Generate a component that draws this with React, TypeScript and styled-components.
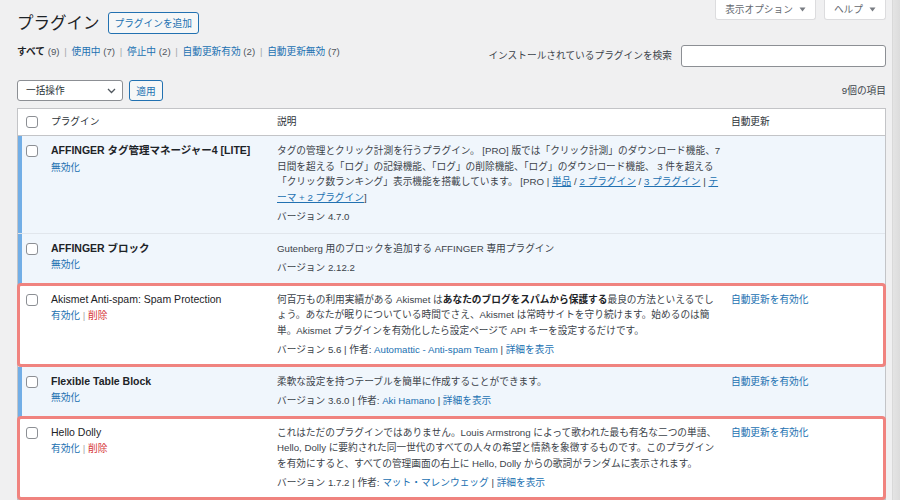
import React from 'react'
import styled, { createGlobalStyle, css } from 'styled-components'

const GlobalStyle = createGlobalStyle`
  * { box-sizing: border-box; }
  html, body { margin: 0; padding: 0; }
  body {
    background: #f0f0f1;
    font-family: "Liberation Sans", "Noto Sans CJK JP", sans-serif;
    font-size: 9.7px;
    line-height: 15.5px;
    color: #3c434a;
    overflow: hidden;
  }
`

const Page = styled.div`
  display: flex;
  min-height: 100vh;
`

const Main = styled.div`
  flex: 1;
  min-width: 0;
  padding: 0 6px 0 17px;
`

const ScrollTrack = styled.div`
  width: 8px;
  background: linear-gradient(to right, #e4e4e4, #dcdcdc);
  border-left: 1px solid #d9d9d9;
`

const TopBar = styled.div`
  display: flex;
  justify-content: space-between;
  align-items: flex-start;
`

const TitleGroup = styled.div`
  display: flex;
  align-items: center;
  gap: 8px;
  padding-top: 12px;
`

const Title = styled.h1`
  margin: 0;
  font-size: 16.5px;
  font-weight: 400;
  line-height: 22px;
  color: #1d2327;
`

const OutlineButton = styled.button`
  height: 22px;
  padding: 0 6px;
  font-family: inherit;
  font-size: 9.7px;
  color: #2271b1;
  background: #f6f7f7;
  border: 1px solid #2271b1;
  border-radius: 3px;
`

const ScreenMeta = styled.div`
  display: flex;
  gap: 8px;
`

const MetaTab = styled.div`
  display: flex;
  align-items: center;
  gap: 6px;
  height: 20px;
  padding: 0 9px;
  color: #646970;
  background: #fff;
  border: 1px solid #dcdcde;
  border-top: none;
  border-radius: 0 0 3px 3px;
`

const FilterBar = styled.div`
  display: flex;
  justify-content: space-between;
  align-items: flex-start;
  margin-top: 10px;
`

const SubSub = styled.ul`
  display: flex;
  margin: 0;
  padding: 0;
  list-style: none;
  white-space: pre;
`

const Current = styled.strong`
  color: #1d2327;
  font-weight: 700;
`

const Count = styled.span`
  color: #50575e;
`

const Sep = styled.span`
  padding: 0 2px;
  color: #a7aaad;
`

const Link = styled.a<{ $underline?: boolean; $danger?: boolean }>`
  color: ${(p) => (p.$danger ? '#d63638' : '#2271b1')};
  text-decoration: ${(p) => (p.$underline ? 'underline' : 'none')};
  cursor: pointer;
`

const SearchBox = styled.div`
  display: flex;
  align-items: center;
  gap: 9px;
  margin-top: 1px;
`

const SearchLabel = styled.label`
  color: #3c434a;
`

const SearchInput = styled.input`
  width: 205px;
  height: 22px;
  border: 1px solid #8c8f94;
  border-radius: 3px;
  background: #fff;
  outline: none;
`

const TableNav = styled.div`
  display: flex;
  justify-content: space-between;
  align-items: center;
  margin-top: 13px;
`

const BulkGroup = styled.div`
  display: flex;
  gap: 6px;
`

const BulkSelect = styled.div`
  display: flex;
  align-items: center;
  justify-content: space-between;
  width: 106px;
  height: 21px;
  padding: 0 6px 0 8px;
  color: #2c3338;
  background: #fff;
  border: 1px solid #8c8f94;
  border-radius: 3px;
`

const ApplyButton = styled(OutlineButton)`
  height: 21px;
  width: 34px;
  padding: 0;
`

const ItemCount = styled.span`
  color: #3c434a;
`

const PluginTable = styled.div`
  margin-top: 7px;
  background: #fff;
  border: 1px solid #c3c4c7;
`

const gridCols = '33px 226px 454px 1fr'

const HeadRow = styled.div`
  display: grid;
  grid-template-columns: ${gridCols};
  border-bottom: 1px solid #c3c4c7;
`

const HeadCell = styled.div`
  padding: 5px 0 5.5px;
  color: #2c3338;
`

const PluginRow = styled.div<{ $active: boolean; $highlight?: boolean }>`
  position: relative;
  display: grid;
  grid-template-columns: ${gridCols};
  background: ${(p) => (p.$active ? '#f0f6fc' : '#fff')};
  box-shadow: ${(p) => (p.$active ? 'inset 4px 0 0 #72aee6' : 'none')};

  & + & {
    border-top: 1px solid #e1e6ec;
  }

  ${(p) =>
    p.$highlight &&
    css`
      z-index: 1;
      border-radius: 3px;
      outline: 3px solid #f0837f;
      outline-offset: -2px;
    `}
`

const CheckCell = styled.div<{ $head?: boolean }>`
  padding: ${(p) => (p.$head ? '6.5px' : '9px')} 0 0 8px;
`

const Checkbox = styled.span`
  display: block;
  width: 12px;
  height: 12px;
  background: #fff;
  border: 1px solid #8c8f94;
  border-radius: 3px;
`

const NameCell = styled.div`
  padding: 7px 10px 8px 0;
`

const PluginTitle = styled.strong<{ $active: boolean }>`
  display: block;
  font-size: 10.5px;
  font-weight: ${(p) => (p.$active ? 700 : 400)};
  color: #1d2327;
`

const RowActions = styled.div`
  padding-top: 1px;
`

const ActionSep = styled.span`
  color: #a7aaad;
  white-space: pre;
`

const DescCell = styled.div`
  padding: 7px 10px 8px 0;
`

const Description = styled.div`
  white-space: nowrap;
  color: #3c434a;

  strong {
    color: #1d2327;
    font-weight: 700;
  }
`

const VersionLine = styled.div`
  margin-top: 4px;
  color: #3c434a;
`

const AutoCell = styled.div`
  padding: 7px 10px 8px 0;
`

type Plugin = {
  name: string
  active: boolean
  highlight?: boolean
  description: React.ReactNode
  version: string
  author?: string
  autoUpdate?: boolean
}

const plugins: Plugin[] = [
  {
    name: 'AFFINGER タグ管理マネージャー4 [LITE]',
    active: true,
    description: (
      <>
        タグの管理とクリック計測を行うプラグイン。 [PRO] 版では「クリック計測」のダウンロード機能、7
        <br />
        日間を超える「ログ」の記録機能、「ログ」の削除機能、「ログ」のダウンロード機能、 3 件を超える
        <br />
        「クリック数ランキング」表示機能を搭載しています。 [PRO | <Link $underline>単品</Link> /{' '}
        <Link $underline>2 プラグイン</Link> / <Link $underline>3 プラグイン</Link> |{' '}
        <Link $underline>
          テ
          <br />
          ーマ + 2 プラグイン
        </Link>
        ]
      </>
    ),
    version: '4.7.0',
  },
  {
    name: 'AFFINGER ブロック',
    active: true,
    description: 'Gutenberg 用のブロックを追加する AFFINGER 専用プラグイン',
    version: '2.12.2',
  },
  {
    name: 'Akismet Anti-spam: Spam Protection',
    active: false,
    highlight: true,
    description: (
      <>
        何百万もの利用実績がある Akismet は<strong>あなたのブログをスパムから保護する</strong>最良の方法といえるでし
        <br />
        ょう。あなたが眠りについている時間でさえ、Akismet は常時サイトを守り続けます。始めるのは簡
        <br />
        単。Akismet プラグインを有効化したら設定ページで API キーを設定するだけです。
      </>
    ),
    version: '5.6',
    author: 'Automattic - Anti-spam Team',
    autoUpdate: true,
  },
  {
    name: 'Flexible Table Block',
    active: true,
    description: '柔軟な設定を持つテーブルを簡単に作成することができます。',
    version: '3.6.0',
    author: 'Aki Hamano',
    autoUpdate: true,
  },
  {
    name: 'Hello Dolly',
    active: false,
    highlight: true,
    description: (
      <>
        これはただのプラグインではありません。Louis Armstrong によって歌われた最も有名な二つの単語、
        <br />
        Hello, Dolly に要約された同一世代のすべての人々の希望と情熱を象徴するものです。このプラグイン
        <br />
        を有効にすると、すべての管理画面の右上に Hello, Dolly からの歌詞がランダムに表示されます。
      </>
    ),
    version: '1.7.2',
    author: 'マット・マレンウェッグ',
    autoUpdate: true,
  },
]

const filters = [
  { label: 'すべて', count: 9, current: true },
  { label: '使用中', count: 7 },
  { label: '停止中', count: 2 },
  { label: '自動更新有効', count: 2 },
  { label: '自動更新無効', count: 7 },
]

const Caret = () => (
  <svg width="7" height="5" viewBox="0 0 7 5">
    <path d="M0.5 0.5 L6.5 0.5 L3.5 4.5 Z" fill="#787c82" />
  </svg>
)

const Chevron = () => (
  <svg width="9" height="6" viewBox="0 0 9 6">
    <path d="M1 1 L4.5 4.5 L8 1" fill="none" stroke="#50575e" strokeWidth="1.3" />
  </svg>
)

const App = () => {
  return (
    <Page>
      <GlobalStyle />
      <Main>
        <TopBar>
          <TitleGroup>
            <Title>プラグイン</Title>
            <OutlineButton>プラグインを追加</OutlineButton>
          </TitleGroup>
          <ScreenMeta>
            <MetaTab>
              表示オプション <Caret />
            </MetaTab>
            <MetaTab>
              ヘルプ <Caret />
            </MetaTab>
          </ScreenMeta>
        </TopBar>

        <FilterBar>
          <SubSub>
            {filters.map((f, index) => (
              <li key={f.label}>
                {f.current ? <Current>{f.label}</Current> : <Link>{f.label}</Link>}{' '}
                <Count>({f.count})</Count>
                {index < filters.length - 1 && <Sep> | </Sep>}
              </li>
            ))}
          </SubSub>
          <SearchBox>
            <SearchLabel>インストールされているプラグインを検索</SearchLabel>
            <SearchInput type="search" />
          </SearchBox>
        </FilterBar>

        <TableNav>
          <BulkGroup>
            <BulkSelect>
              一括操作 <Chevron />
            </BulkSelect>
            <ApplyButton>適用</ApplyButton>
          </BulkGroup>
          <ItemCount>9個の項目</ItemCount>
        </TableNav>

        <PluginTable>
          <HeadRow>
            <CheckCell $head>
              <Checkbox />
            </CheckCell>
            <HeadCell>プラグイン</HeadCell>
            <HeadCell>説明</HeadCell>
            <HeadCell>自動更新</HeadCell>
          </HeadRow>
          {plugins.map((p) => (
            <PluginRow key={p.name} $active={p.active} $highlight={p.highlight}>
              <CheckCell>
                <Checkbox />
              </CheckCell>
              <NameCell>
                <PluginTitle $active={p.active}>{p.name}</PluginTitle>
                <RowActions>
                  {p.active ? (
                    <Link>無効化</Link>
                  ) : (
                    <>
                      <Link>有効化</Link>
                      <ActionSep> | </ActionSep>
                      <Link $danger>削除</Link>
                    </>
                  )}
                </RowActions>
              </NameCell>
              <DescCell>
                <Description>{p.description}</Description>
                <VersionLine>
                  バージョン {p.version}
                  {p.author && (
                    <>
                      {' '}| 作者: <Link>{p.author}</Link> | <Link>詳細を表示</Link>
                    </>
                  )}
                </VersionLine>
              </DescCell>
              <AutoCell>{p.autoUpdate && <Link>自動更新を有効化</Link>}</AutoCell>
            </PluginRow>
          ))}
        </PluginTable>
      </Main>
      <ScrollTrack />
    </Page>
  )
}

export default App
